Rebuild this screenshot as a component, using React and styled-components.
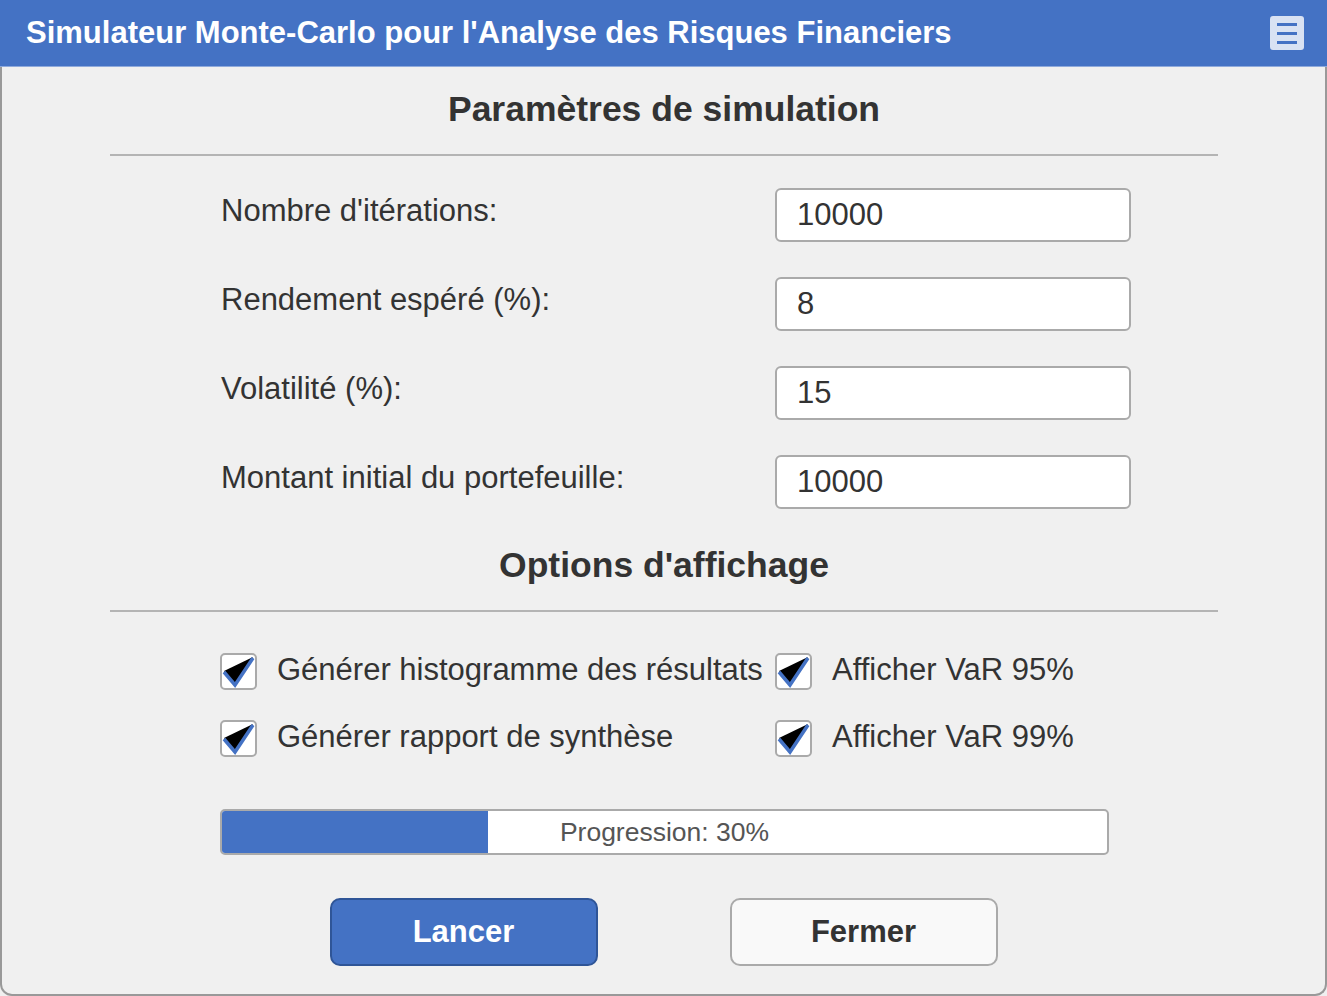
import React from 'react'
import styled, { createGlobalStyle } from 'styled-components'

const GlobalStyle = createGlobalStyle`
  html, body {
    margin: 0;
    padding: 0;
    background: #f0f0f0;
  }
  body {
    font-family: 'Liberation Sans', Arial, sans-serif;
    color: #333;
  }
  * {
    box-sizing: border-box;
  }
`

const Window = styled.div`
  width: 1327px;
  height: 996px;
  display: flex;
  flex-direction: column;
`

const TitleBar = styled.div`
  height: 67px;
  flex-shrink: 0;
  background: #4472c4;
  border-bottom: 1px solid #8faadc;
  display: flex;
  align-items: center;
  justify-content: space-between;
  padding: 0 23px 0 26px;
  h1 {
    margin: 0;
    font-size: 31px;
    font-weight: bold;
    color: #fff;
  }
`

const MenuButton = styled.div`
  width: 34px;
  height: 34px;
  border-radius: 3px;
  background: #d9e2f3;
  display: flex;
  flex-direction: column;
  align-items: center;
  justify-content: center;
  gap: 6px;
  span {
    display: block;
    width: 20px;
    height: 3px;
    background: #4472c4;
  }
`

const Body = styled.div`
  flex: 1;
  background: #f0f0f0;
  border: 2px solid #999;
  border-top: none;
  border-radius: 0 0 12px 12px;
  padding: 22px 107px 0 108px;
`

const SectionTitle = styled.h2`
  margin: ${p => (p.$first ? '0' : '36px')} 0 0;
  font-size: 35.5px;
  line-height: 40px;
  font-weight: bold;
  text-align: center;
  color: #333;
  padding-bottom: 25px;
  border-bottom: 2px solid #b4b4b4;
`

const Content = styled.div`
  padding-left: 111px;
  width: 1021px;
`

const Fields = styled.div`
  display: flex;
  flex-direction: column;
  gap: 35px;
  padding-top: 32px;
`

const FieldRow = styled.div`
  display: grid;
  grid-template-columns: 554px 356px;
  align-items: start;
  label {
    font-size: 31px;
    line-height: 36px;
    padding-top: 5px;
    color: #333;
  }
`

const Input = styled.input`
  width: 356px;
  height: 54px;
  border: 2px solid #aaa;
  border-radius: 6px;
  background: #fff;
  padding: 0 0 0 20px;
  font-family: 'Liberation Sans', Arial, sans-serif;
  font-size: 31px;
  color: #333;
  outline: none;
`

const Options = styled.div`
  display: grid;
  grid-template-columns: 555px 355px;
  row-gap: 30px;
  padding-top: 41px;
  margin-left: -1px;
`

const Option = styled.label`
  display: flex;
  align-items: center;
  gap: 20px;
  font-size: 31px;
  line-height: 36px;
  color: #333;
  white-space: nowrap;
`

const OptionText = styled.span`
  position: relative;
  top: -2px;
`

const Box = styled.span`
  width: 37px;
  height: 37px;
  flex-shrink: 0;
  border: 2px solid #aaa;
  border-radius: 5px;
  background: #fff;
  display: flex;
  align-items: center;
  justify-content: center;
`

const Progress = styled.div`
  position: relative;
  margin-top: 52px;
  margin-left: -1px;
  width: 889px;
  height: 46px;
  border: 2px solid #aaa;
  border-radius: 5px;
  background: #fff;
  overflow: hidden;
`

const Fill = styled.div`
  height: 100%;
  background: #4472c4;
`

const ProgressLabel = styled.span`
  position: absolute;
  inset: 0;
  display: flex;
  align-items: center;
  justify-content: center;
  font-size: 26.5px;
  color: #555;
`

const Actions = styled.div`
  display: flex;
  justify-content: center;
  gap: 132px;
  margin-top: 43px;
  margin-left: -1px;
`

const Button = styled.button`
  width: 268px;
  height: 68px;
  border-radius: 10px;
  border: 2px solid ${p => (p.$primary ? '#2f5597' : '#aaa')};
  background: ${p => (p.$primary ? '#4472c4' : '#f9f9f9')};
  color: ${p => (p.$primary ? '#fff' : '#333')};
  font-family: 'Liberation Sans', Arial, sans-serif;
  font-size: 31px;
  font-weight: bold;
  cursor: pointer;
`

function Check() {
  return (
    <svg width="33" height="33" viewBox="0 0 33 33">
      <polygon points="2,16 31,2 13,31" fill="#000" />
      <polyline
        points="2,17 13,30 31,3"
        fill="none"
        stroke="#4472c4"
        strokeWidth="3.5"
        strokeLinejoin="miter"
      />
    </svg>
  )
}

const fields = [
  ['Nombre d\'itérations:', '10000'],
  ['Rendement espéré (%):', '8'],
  ['Volatilité (%):', '15'],
  ['Montant initial du portefeuille:', '10000']
]

const options = [
  'Générer histogramme des résultats',
  'Afficher VaR 95%',
  'Générer rapport de synthèse',
  'Afficher VaR 99%'
]

export default function App() {
  const progress = 30
  return (
    <Window>
      <GlobalStyle />
      <TitleBar>
        <h1>Simulateur Monte-Carlo pour l'Analyse des Risques Financiers</h1>
        <MenuButton>
          <span />
          <span />
          <span />
        </MenuButton>
      </TitleBar>
      <Body>
        <SectionTitle $first>Paramètres de simulation</SectionTitle>
        <Content>
          <Fields>
            {fields.map(([label, value]) => (
              <FieldRow key={label}>
                <label>{label}</label>
                <Input defaultValue={value} />
              </FieldRow>
            ))}
          </Fields>
        </Content>
        <SectionTitle>Options d'affichage</SectionTitle>
        <Content>
          <Options>
            {options.map(o => (
              <Option key={o}>
                <Box>
                  <Check />
                </Box>
                <OptionText>{o}</OptionText>
              </Option>
            ))}
          </Options>
          <Progress>
            <Fill style={{ width: `${progress}%` }} />
            <ProgressLabel>Progression: {progress}%</ProgressLabel>
          </Progress>
        </Content>
        <Actions>
          <Button $primary>Lancer</Button>
          <Button>Fermer</Button>
        </Actions>
      </Body>
    </Window>
  )
}
